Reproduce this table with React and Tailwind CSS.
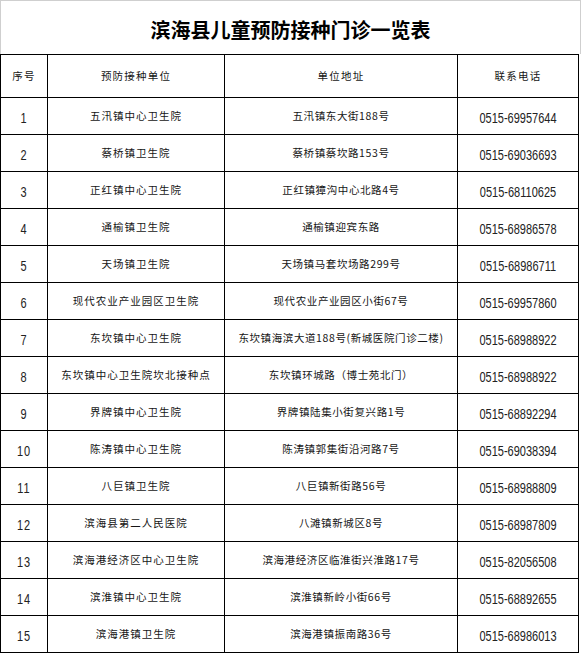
const rows = [
  ['1', '五汛镇中心卫生院', '五汛镇东大街188号', '0515-69957644'],
  ['2', '蔡桥镇卫生院', '蔡桥镇蔡坎路153号', '0515-69036693'],
  ['3', '正红镇中心卫生院', '正红镇獐沟中心北路4号', '0515-68110625'],
  ['4', '通榆镇卫生院', '通榆镇迎宾东路', '0515-68986578'],
  ['5', '天场镇卫生院', '天场镇马套坎场路299号', '0515-68986711'],
  ['6', '现代农业产业园区卫生院', '现代农业产业园区小街67号', '0515-69957860'],
  ['7', '东坎镇中心卫生院', '东坎镇海滨大道188号(新城医院门诊二楼)', '0515-68988922'],
  ['8', '东坎镇中心卫生院坎北接种点', '东坎镇环城路（博士苑北门）', '0515-68988922'],
  ['9', '界牌镇中心卫生院', '界牌镇陆集小街复兴路1号', '0515-68892294'],
  ['10', '陈涛镇中心卫生院', '陈涛镇郭集街沿河路7号', '0515-69038394'],
  ['11', '八巨镇卫生院', '八巨镇新街路56号', '0515-68988809'],
  ['12', '滨海县第二人民医院', '八滩镇新城区8号', '0515-68987809'],
  ['13', '滨海港经济区中心卫生院', '滨海港经济区临淮街兴淮路17号', '0515-82056508'],
  ['14', '滨淮镇中心卫生院', '滨淮镇新岭小街66号', '0515-68892655'],
  ['15', '滨海港镇卫生院', '滨海港镇振南路36号', '0515-68986013'],
];

const cjk = "font-['Noto_Sans_CJK_SC',sans-serif]";
const num = "font-['Liberation_Sans',sans-serif]";

function Digits({ children }) {
  return (
    <span className={`inline-block scale-y-[1.25] text-[11px] text-[#222] ${num}`}>{children}</span>
  );
}

export default function App() {
  return (
    <div className="w-[581px] h-[656px] bg-white text-[#151515] overflow-hidden">
      <div className="h-[54px] border-x border-t border-[#cfcfcf] flex items-center justify-center pt-[4px]">
        <h1 className={`${cjk} text-[20px] font-bold text-black leading-none`}>
          滨海县儿童预防接种门诊一览表
        </h1>
      </div>

      <table className="table-fixed border-collapse w-[578px]">
        <colgroup>
          <col className="w-[47px]" />
          <col className="w-[177px]" />
          <col className="w-[233px]" />
          <col className="w-[121px]" />
        </colgroup>
        <thead>
          <tr className="h-[43px]">
            {['序号', '预防接种单位', '单位地址', '联系电话'].map((h) => (
              <th
                key={h}
                className={`border border-black font-normal text-center text-[10.5px] tracking-[1.2px] ${cjk}`}
              >
                {h}
              </th>
            ))}
          </tr>
        </thead>
        <tbody>
          {rows.map(([no, unit, addr, tel]) => (
            <tr key={no} className="h-[37px]">
              <td className="border border-black text-center p-0 tracking-[1px]">
                <Digits>{no}</Digits>
              </td>
              <td className={`border border-black text-center p-0 text-[10.5px] tracking-[1px] whitespace-nowrap ${cjk}`}>
                {unit}
              </td>
              <td className={`border border-black text-center p-0 text-[10.5px] tracking-[0.6px] whitespace-nowrap ${cjk}`}>
                {addr}
              </td>
              <td className="border border-black text-center p-0">
                <Digits>{tel}</Digits>
              </td>
            </tr>
          ))}
        </tbody>
      </table>
    </div>
  );
}
